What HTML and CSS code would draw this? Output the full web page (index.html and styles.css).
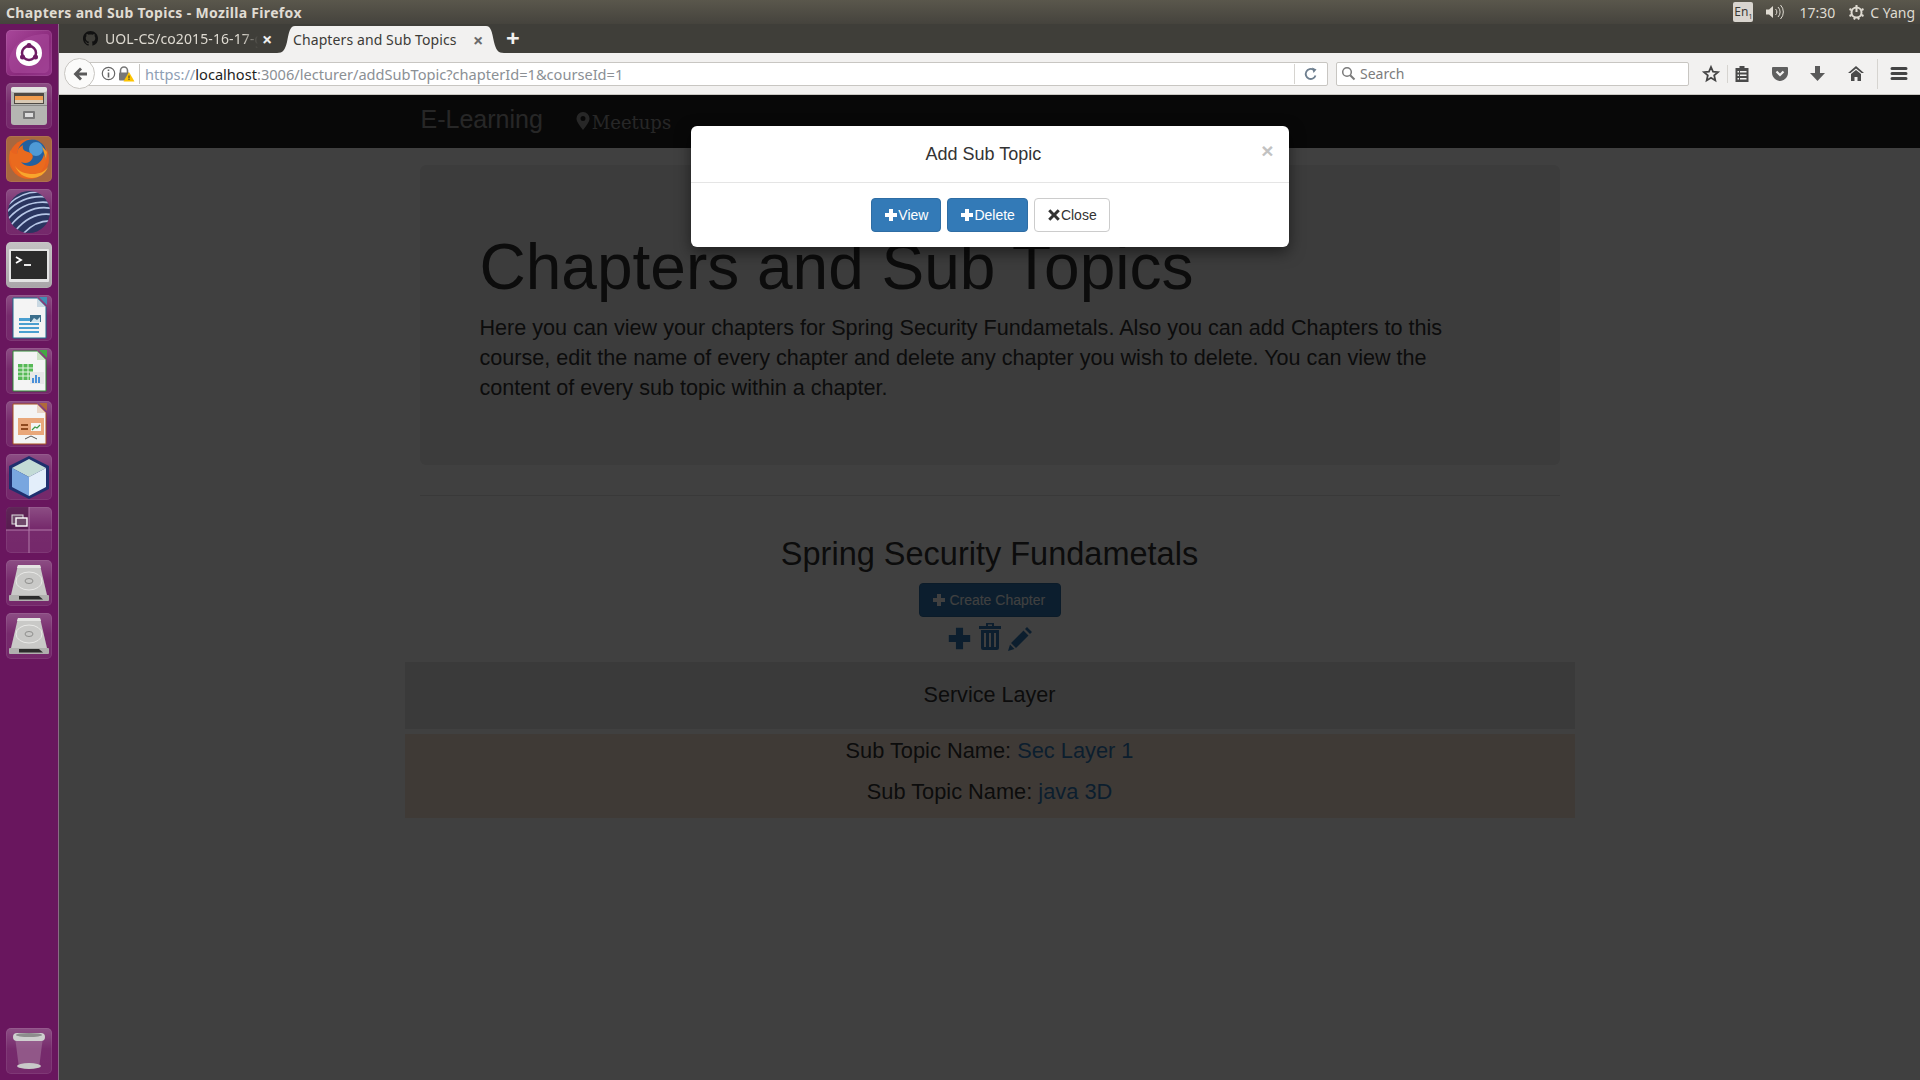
FILE: index.html
```html
<!DOCTYPE html>
<html lang="en">
<head>
  <meta charset="UTF-8" />
  <title>Chapters and Sub Topics - Mozilla Firefox</title>
  <link rel="stylesheet" href="styles.css">
</head>
<body>
  <svg class="defs" width="0" height="0">
    <symbol id="g-plus" viewBox="0 0 14 14"><path d="M5 1h4v4h4v4H9v4H5V9H1V5h4z"/></symbol>
    <symbol id="g-x" viewBox="0 0 14 14"><path d="M3.300 1.200L7 4.900l3.700-3.700 2.100 2.100L9.100 7l3.700 3.700-2.100 2.100L7 9.100l-3.700 3.700-2.100-2.100L4.900 7 1.200 3.300z"/></symbol>
    <symbol id="disk" viewBox="0 0 46 46">
      <path d="M12 5h22l7 30H5z" fill="#c9c9c7"/>
      <path d="M12 5h22l1 3H11z" fill="#e4e4e2"/>
      <ellipse cx="23" cy="21" rx="13" ry="9" fill="none" stroke="#e9e9e7" stroke-width="1"/>
      <ellipse cx="23" cy="21" rx="4" ry="2.500" fill="none" stroke="#8f8f8d" stroke-width="1"/>
      <rect x="3" y="35" width="40" height="6" rx="1" fill="#b0b0ae"/>
      <path d="M13 36h20l4 3.500H13z" fill="#2b2b2b"/>
    </symbol>
  </svg>

  <!-- Ubuntu top panel -->
  <div class="panel">
    <span class="panel-title">Chapters and Sub Topics - Mozilla Firefox</span>
    <div class="indicators">
      <span class="lang">En<sub>1</sub></span>
      <svg class="vol" width="20" height="16" viewBox="0 0 20 16"><path d="M1 5.500h3L8 2v12L4 10.500H1z" fill="#dfdbd2"/><path d="M10.500 5a4 4 0 0 1 0 6M13 3a7 7 0 0 1 0 10M15.500 1a10 10 0 0 1 0 14" fill="none" stroke="#dfdbd2" stroke-width="1"/></svg>
      <span class="clock">17:30</span>
      <svg class="gear" width="17" height="17" viewBox="0 0 17 17"><circle cx="8.500" cy="8.500" r="5" fill="none" stroke="#dfdbd2" stroke-width="2"/><path d="M8.500 1v7M1.500 5l2 1M15.500 5l-2 1M1.500 12l2-1M15.500 12l-2-1M6 15.500l1-2M11 15.500l-1-2" stroke="#dfdbd2" stroke-width="2"/></svg>
      <span class="user">C Yang</span>
    </div>
  </div>

  <div class="desktop">
    <!-- Launcher -->
    <nav class="launcher">
      <div class="tile tile-ubuntu">
        <svg viewBox="0 0 46 46"><path d="M3 30C6 14 20 4 40 4c3 0 3 1 3 3v30c0 4-2 6-6 6H9c-4 0-6-4-6-13z" fill="#a94a9b" opacity=".6"/><circle cx="23" cy="23" r="13" fill="#fff"/><circle cx="23" cy="23" r="7" fill="none" stroke="#6f1d63" stroke-width="2.500"/><circle cx="23" cy="15.500" r="2.500" fill="#6f1d63"/><circle cx="16.500" cy="27" r="2.500" fill="#6f1d63"/><circle cx="29.500" cy="27" r="2.500" fill="#6f1d63"/></svg>
      </div>
      <div class="tile">
        <svg viewBox="0 0 46 46"><rect x="5" y="4" width="36" height="38" rx="3" fill="#b5b5b2"/><rect x="5" y="4" width="36" height="5" rx="2" fill="#e3e3e1"/><rect x="8" y="10" width="30" height="11" fill="#4f4a44"/><rect x="9" y="13" width="28" height="4" fill="#ef9c4e"/><rect x="9" y="17" width="28" height="3" fill="#d8c9b4"/><rect x="5" y="22" width="36" height="1" fill="#8a8a88"/><rect x="17" y="28" width="12" height="8" rx="1" fill="#777"/><rect x="19" y="30" width="8" height="4" fill="#ddd"/></svg>
      </div>
      <div class="tile tile-firefox">
        <svg viewBox="0 0 46 46"><circle cx="23" cy="23" r="20" fill="#e8631f"/><circle cx="26" cy="18" r="14.500" fill="#23609f"/><circle cx="30" cy="13" r="7" fill="#4f9ad6"/><path d="M4 14c2 3 4 4 7 4 0-4 2-7 6-9-1 4 1 6 5 7 4 1 6 4 4 7-2 4-7 5-11 3 3 4 9 5 14 3 5-2 8-6 9-11l2 6c-1 10-9 18-19 18C10 42 2 28 4 14z" fill="#ea6a1e"/><path d="M9 30c3 7 9 12 17 12 7 0 13-4 16-11-4 5-9 7-15 7-8 0-14-2-18-8z" fill="#f8a62c"/><path d="M36 10l5 6-1 8z" fill="#f59a23"/></svg>
      </div>
      <div class="tile">
        <svg viewBox="0 0 46 46"><defs><clipPath id="ball"><circle cx="23" cy="23" r="21"/></clipPath></defs><circle cx="23" cy="23" r="21" fill="#2a3560"/><g clip-path="url(#ball)" fill="none" stroke="#b6c6e6" stroke-width="1.700"><path d="M0 18C9 8 20 3 32 3M0 24C12 10 26 6 42 8M2 30C14 16 30 11 46 14M5 36C17 22 32 16 48 20M10 41c11-13 24-18 38-15M17 45c9-10 18-14 30-13"/></g></svg>
      </div>
      <div class="tile tile-terminal">
        <svg viewBox="0 0 46 46"><rect x="3" y="7" width="40" height="33" rx="1" fill="#e4e4e4"/><rect x="5" y="9" width="36" height="28" fill="#2b2b2b"/><path d="M10 15l5 3-5 3" fill="none" stroke="#fff" stroke-width="1.800"/><path d="M18 23h7" stroke="#fff" stroke-width="1.800"/></svg>
      </div>
      <div class="tile">
        <svg viewBox="0 0 46 46"><path d="M7 3h24l9 9v31H7z" fill="#f4f4f4" stroke="#1b6d8f" stroke-width="1"/><path d="M31 3l9 9h-9z" fill="#c9d8e2"/><path d="M33 2h8v8z" fill="#3f8fb5"/><path d="M13 23h12v3H13zM13 28h20v2H13zM13 32h20v2H13zM13 36h20v2H13z" fill="#4a9fd0"/><rect x="24" y="20" width="11" height="7" fill="#3c6f8c"/><path d="M25 27l3-4 3 2 3-3v5z" fill="#cfe3ec"/></svg>
      </div>
      <div class="tile">
        <svg viewBox="0 0 46 46"><path d="M7 3h24l9 9v31H7z" fill="#f4f4f4" stroke="#2c8a35" stroke-width="1"/><path d="M31 3l9 9h-9z" fill="#cde3c6"/><path d="M33 2h8v8z" fill="#43a843"/><path d="M12 16h15v16H12z" fill="#57b957"/><path d="M12 20h15M12 24h15M12 28h15M17 16v16M22 16v16" stroke="#e9f5e6" stroke-width="1"/><rect x="24" y="24" width="14" height="12" fill="#e8e8e8"/><path d="M26 35v-5h2v5zM29 35v-8h2v8zM32 35v-6h2v6z" fill="#4a90d9"/></svg>
      </div>
      <div class="tile">
        <svg viewBox="0 0 46 46"><path d="M7 3h24l9 9v31H7z" fill="#f4f4f4" stroke="#a8501e" stroke-width="1"/><path d="M31 3l9 9h-9z" fill="#ead5c5"/><path d="M33 2h8v8z" fill="#b06a3a"/><rect x="12" y="17" width="26" height="17" fill="#e9a77a"/><rect x="15" y="23" width="7" height="2" fill="#8f4a1e"/><rect x="15" y="27" width="7" height="2" fill="#8f4a1e"/><rect x="25" y="22" width="10" height="8" fill="#f4f4f4"/><path d="M26 29l3-3 2 1 3-3" fill="none" stroke="#3f9a46" stroke-width="1.200"/><path d="M19 38l6-3 6 3" fill="none" stroke="#555" stroke-width="1"/></svg>
      </div>
      <div class="tile">
        <svg viewBox="0 0 46 46"><path d="M23 2l20 10v23L23 45 3 35V12z" fill="#1f2f6e"/><path d="M23 5l17 9-17 9-17-9z" fill="#c3dbd6"/><path d="M6 14l17 9v19L6 33z" fill="#79a6df"/><path d="M40 14l-17 9v19l17-9z" fill="#e3eefa"/></svg>
      </div>
      <div class="tile tile-workspace">
        <svg viewBox="0 0 46 46"><rect x="0" y="0" width="23" height="23" fill="#4b1645" opacity=".7"/><path d="M23 0v46M0 23h46" stroke="#b27aa9" stroke-width="1"/><rect x="6" y="8" width="11" height="9" fill="#6f4a6a" stroke="#ddd" stroke-width="1"/><rect x="10" y="11" width="11" height="8" fill="#6f4a6a" stroke="#fff" stroke-width="1.400"/></svg>
      </div>
      <div class="tile"><svg viewBox="0 0 46 46"><use href="#disk"/></svg></div>
      <div class="tile"><svg viewBox="0 0 46 46"><use href="#disk"/></svg></div>
      <div class="tile tile-trash">
        <svg viewBox="0 0 46 46"><path d="M9 9l4 31h20l4-31z" fill="#a77ba0" opacity=".55"/><ellipse cx="23" cy="38" rx="12" ry="3" fill="#c9c9c9"/><rect x="7" y="5" width="32" height="8" rx="4" fill="#cfcfcf"/><ellipse cx="23" cy="7" rx="13" ry="2" fill="#8d8d8d"/></svg>
      </div>
    </nav>

    <div class="browser">
      <!-- Tabs -->
      <div class="tabs">
        <div class="tab">
          <svg class="tab-icon" width="15" height="15" viewBox="0 0 16 16"><path fill="#111" d="M8 0C3.580 0 0 3.580 0 8c0 3.540 2.290 6.530 5.470 7.590.4.070.55-.17.55-.38 0-.19-.01-.82-.01-1.490-2.010.37-2.530-.49-2.690-.94-.09-.23-.48-.94-.82-1.130-.28-.15-.68-.52-.01-.53.63-.01 1.080.58 1.230.82.72 1.210 1.870.87 2.330.66.07-.52.28-.87.51-1.070-1.780-.2-3.640-.89-3.640-3.950 0-.87.31-1.590.82-2.150-.08-.2-.36-1.020.08-2.120 0 0 .67-.21 2.200.82.64-.18 1.320-.27 2-.27.68 0 1.360.09 2 .27 1.530-1.040 2.200-.82 2.200-.82.44 1.100.16 1.920.08 2.120.51.56.82 1.270.82 2.150 0 3.070-1.870 3.750-3.650 3.950.29.25.54.73.54 1.480 0 1.070-.01 1.930-.01 2.200 0 .21.15.46.55.38A8.013 8.013 0 0 0 16 8c0-4.420-3.580-8-8-8z"/></svg>
          <span class="tab-label">UOL-CS/co2015-16-17-g</span>
          <span class="tab-close">×</span>
        </div>
        <div class="tab-active">
          <svg class="tab-curve" width="18" height="27" viewBox="0 0 18 27"><path d="M0 27c6 0 8-3 10-11C12 6 13 0 18 0v27z" fill="#f2f1f0"/></svg>
          <div class="tab-body">
            <span class="tab-label">Chapters and Sub Topics</span>
            <span class="tab-close">×</span>
          </div>
          <svg class="tab-curve" width="18" height="27" viewBox="0 0 18 27"><path d="M18 27c-6 0-8-3-10-11C6 6 5 0 0 0v27z" fill="#f2f1f0"/></svg>
        </div>
        <span class="new-tab">+</span>
      </div>

      <!-- Toolbar -->
      <div class="toolbar">
        <button class="back">
          <svg width="16" height="16" viewBox="0 0 16 16"><path d="M8 1.500l2 2L7 6.500h8v3H7l3 3-2 2L1.500 8z" fill="#5a5a5a"/></svg>
        </button>
        <div class="urlbar">
          <svg class="info" width="15" height="15" viewBox="0 0 15 15"><circle cx="7.500" cy="7.500" r="6.200" fill="none" stroke="#666" stroke-width="1.200"/><path d="M6.700 6.500h1.600v5H6.700zM6.700 3.500h1.600v1.600H6.700z" fill="#666"/></svg>
          <svg class="lock" width="17" height="16" viewBox="0 0 17 16"><path d="M2.500 7V4.500a3.500 3.500 0 0 1 7 0V7" fill="none" stroke="#777" stroke-width="1.600"/><rect x="1" y="6.500" width="10" height="8" rx="1" fill="#777"/><path d="M11 6l5.500 9.500h-11z" fill="#fdc400"/><path d="M10.500 9.500h1v3h-1zM10.500 13h1v1h-1z" fill="#333"/></svg>
          <span class="url"><span class="scheme">https://</span><span class="host">localhost</span>:3006/lecturer/addSubTopic?chapterId=1&amp;courseId=1</span>
          <span class="reload">
            <svg width="14" height="14" viewBox="0 0 14 14"><path d="M11.500 8.500A5 5 0 1 1 9.500 2.800" fill="none" stroke="#6e7f8f" stroke-width="1.800"/><path d="M8.200 0.500l4.300 2-3 3.500z" fill="#6e7f8f"/></svg>
          </span>
        </div>
        <div class="searchbar">
          <svg width="15" height="15" viewBox="0 0 15 15"><circle cx="6" cy="6" r="4.300" fill="none" stroke="#7a7a7a" stroke-width="1.500"/><path d="M9.200 9.200l4.300 4.300" stroke="#7a7a7a" stroke-width="2"/></svg>
          <span class="placeholder">Search</span>
        </div>
        <div class="tools">
          <svg class="tool" width="24" height="20" viewBox="-4 -2 24 20"><path d="M8 1l2 4.600 5 .5-3.800 3.300 1.100 5L8 11.800l-4.300 2.600 1.100-5L1 6.100l5-.5z" fill="none" stroke="#454545" stroke-width="1.800"/></svg>
          <span class="tool-sep"></span>
          <svg class="tool" width="24" height="20" viewBox="-4 -2 24 20"><path d="M1.500 2h4V0h5v2h4v14h-13z" fill="#4a4a4a"/><path d="M3.500 5h1.500v1.500H3.500zM6 5h6.500v1.500H6zM3.500 8.500h1.500V10H3.500zM6 8.500h6.500V10H6zM3.500 12h1.500v1.500H3.500zM6 12h6.500v1.500H6z" fill="#f2f1f0"/></svg>
          <svg class="tool" width="24" height="20" viewBox="-4 -2 24 20"><path d="M1 1h14a1 1 0 0 1 1 1v5c0 4-4 8-8 8S0 11 0 7V2a1 1 0 0 1 1-1z" fill="#5f5f5f"/><path d="M4.500 5.500L8 9l3.500-3.500" fill="none" stroke="#f2f1f0" stroke-width="2.200"/></svg>
          <svg class="tool" width="24" height="20" viewBox="-4 -2 24 20"><path d="M5 0h5v7h5l-7.500 8L0 7h5z" fill="#5a5a5a"/></svg>
          <svg class="tool" width="24" height="20" viewBox="-4 -2 24 20"><path d="M8 0L0 7h2.500L8 2.500 13.500 7H16z" fill="#4a4a4a"/><path d="M8 4L3 8v7h3.500v-4h3v4H13V8z" fill="#4a4a4a"/></svg>
          <span class="tool-sep tall"></span>
          <svg class="tool" width="24" height="20" viewBox="-4 -2 24 20"><path d="M1 1h14a1 1 0 0 1 0 3H1a1 1 0 0 1 0-3zM1 6h14a1 1 0 0 1 0 3H1a1 1 0 0 1 0-3zM1 11h14a1 1 0 0 1 0 3H1a1 1 0 0 1 0-3z" fill="#444"/></svg>
        </div>
      </div>

      <!-- The page -->
      <div class="page">
        <div class="navbar">
          <div class="nav-inner">
            <a class="brand">E-Learning</a>
            <a class="nav-link">
              <svg width="14" height="18" viewBox="0 0 14 18"><path fill-rule="evenodd" d="M7 0a6.500 6.500 0 0 1 6.500 6.500C13.500 10 10 14 7 18 4 14 .5 10 .5 6.500A6.500 6.500 0 0 1 7 0zm0 4a2.500 2.500 0 1 0 0 5 2.500 2.500 0 0 0 0-5z"/></svg>Meetups
            </a>
          </div>
        </div>

        <div class="container">
          <div class="jumbotron">
            <h1>Chapters and Sub Topics</h1>
            <p>Here you can view your chapters for Spring Security Fundametals. Also you can add Chapters to this course, edit the name of every chapter and delete any chapter you wish to delete. You can view the content of every sub topic within a chapter.</p>
          </div>
          <hr />

          <div class="course">
            <h2>Spring Security Fundametals</h2>
            <button class="btn btn-primary btn-create"><svg class="g" width="14" height="14"><use href="#g-plus"/></svg> Create Chapter</button>
            <div class="chapter-actions">
              <svg width="25" height="25" viewBox="0 0 14 14"><use href="#g-plus"/></svg>
              <svg width="24" height="28" viewBox="0 0 24 28"><path fill-rule="evenodd" d="M8 0h8v3h7v3H1V3h7zm2 1.500V3h4V1.500zM3 7h18v18a2 2 0 0 1-2 2H5a2 2 0 0 1-2-2zm3 3v14h2V10zm5 0v14h2V10zm5 0v14h2V10z"/></svg>
              <svg width="25" height="25" viewBox="0 0 25 25"><path d="M19 1l5 5-2 2-5-5zM15.500 4.500l5 5L8 22l-5-5zM2 18.500L6.500 23 0 25z"/></svg>
            </div>
            <div class="chapter-row">Service Layer</div>
            <div class="topics">
              <div class="topic">Sub Topic Name: <a>Sec Layer 1</a></div>
              <div class="topic">Sub Topic Name: <a>java 3D</a></div>
            </div>
          </div>
        </div>

        <!-- Modal, open on top of the page -->
        <div class="backdrop">
          <div class="modal">
            <div class="modal-header">
              <span class="close">×</span>
              <h4>Add Sub Topic</h4>
            </div>
            <div class="modal-footer">
              <button class="btn btn-primary"><svg class="g" width="14" height="14"><use href="#g-plus"/></svg>View</button>
              <button class="btn btn-primary"><svg class="g" width="14" height="14"><use href="#g-plus"/></svg>Delete</button>
              <button class="btn btn-default"><svg class="g" width="14" height="14"><use href="#g-x"/></svg>Close</button>
            </div>
          </div>
        </div>
      </div>
    </div>
  </div>
</body>
</html>
```

FILE: styles.css
```css
* {
  box-sizing: border-box;
}

html, body {
  height: 100%;
}

body {
  margin: 0;
  display: flex;
  flex-direction: column;
  overflow: hidden;
  font-family: 'Liberation Sans', Arial, sans-serif;
  color: #333;
  background: #404040;
}

.defs {
  position: absolute;
}

/* top panel */
.panel {
  height: 24px;
  flex: none;
  display: flex;
  align-items: center;
  justify-content: space-between;
  padding: 0 5px 0 6px;
  background: linear-gradient(#5a574c, #45433d);
  color: #dfdbd2;
  font-family: 'Noto Sans', sans-serif;
  font-size: 14px;
}

.panel-title {
  font-weight: 700;
  letter-spacing: 0.33px;
  color: #e0dcd3;
}

.indicators {
  display: flex;
  align-items: center;
}

.lang {
  width: 20px;
  height: 20px;
  border-radius: 2px;
  background: #d9d5cf;
  color: #3c3b37;
  font-size: 12px;
  line-height: 20px;
  text-align: center;
}

.lang sub {
  font-size: 7px;
  line-height: 0;
}

.vol {
  margin-left: 12px;
}

.clock {
  margin-left: 14px;
}

.gear {
  margin-left: 13px;
}

.user {
  margin-left: 5px;
}

.desktop {
  flex: 1;
  display: flex;
  min-height: 0;
}

/* launcher */
.launcher {
  width: 59px;
  flex: none;
  display: flex;
  flex-direction: column;
  gap: 7px;
  padding: 6px 0 6px 6px;
  background: #69165e;
  border-right: 1px solid #8a6a86;
}

.tile {
  width: 46px;
  height: 46px;
  flex: none;
  border-radius: 5px;
  background: linear-gradient(rgba(255,255,255,0.24), rgba(255,255,255,0.09) 45%, rgba(255,255,255,0.08));
  box-shadow: inset 0 0 0 1px rgba(255,255,255,0.08);
}

.tile svg {
  display: block;
}

.tile-ubuntu {
  background: linear-gradient(135deg, #a8479a, #8a2a7c 60%, #94358a);
}

.tile-firefox {
  background: #a8673f;
}

.tile-terminal {
  background: linear-gradient(#c4c1c3, #a9a5a8);
}

.tile-workspace {
  overflow: hidden;
}

.tile-trash {
  margin-top: auto;
}

/* browser */
.browser {
  flex: 1;
  min-width: 0;
  display: flex;
  flex-direction: column;
}

.tabs {
  height: 29px;
  flex: none;
  display: flex;
  align-items: stretch;
  background: #3f3e39;
  font-family: 'Noto Sans', sans-serif;
  font-size: 14px;
  letter-spacing: 0.1px;
}

.tab {
  width: 218px;
  display: flex;
  align-items: center;
  padding-left: 24px;
  color: #dfdbd2;
}

.tab-icon {
  flex: none;
  margin-right: 7px;
}

.tab .tab-label {
  width: 153px;
  flex: none;
  white-space: nowrap;
  -webkit-mask-image: linear-gradient(90deg, #000 90%, transparent);
  mask-image: linear-gradient(90deg, #000 90%, transparent);
}

.tab-close {
  margin-left: 4px;
  font-size: 18px;
  font-weight: 700;
  line-height: 1;
  color: #eee;
}

.tab-active {
  width: 227px;
  margin-top: 2px;
  display: flex;
  color: #3c3b37;
}

.tab-curve {
  flex: none;
  display: block;
}

.tab-body {
  flex: 1;
  display: flex;
  align-items: center;
  background: #f2f1f0;
  white-space: nowrap;
}

.tab-active .tab-label {
  margin-left: -2px;
  width: 180px;
}

.tab-active .tab-close {
  margin-left: 0;
  color: #6b6b6b;
}

.new-tab {
  margin-left: 2px;
  font-size: 24px;
  line-height: 27px;
  font-weight: 700;
  color: #f2f1f0;
}

.toolbar {
  height: 42px;
  flex: none;
  display: flex;
  align-items: center;
  padding-left: 5px;
  background: #f2f1f0;
  border-bottom: 1px solid #c9c7c3;
  font-family: 'Noto Sans', sans-serif;
  font-size: 14.600px;
}

.back {
  position: relative;
  z-index: 1;
  width: 31px;
  height: 31px;
  flex: none;
  margin-right: -10px;
  padding: 0;
  display: flex;
  align-items: center;
  justify-content: center;
  background: #fbfbfa;
  border: 1px solid #c8c6c2;
  border-radius: 50%;
}

.urlbar,
.searchbar {
  height: 24px;
  display: flex;
  align-items: center;
  background: #fff;
  border: 1px solid #c8c6c2;
  border-radius: 2px;
}

.urlbar {
  flex: 1;
  min-width: 0;
  padding-left: 15px;
}

.info {
  flex: none;
}

.lock {
  flex: none;
  margin-left: 2px;
}

.url {
  flex: 1;
  margin-left: 4px;
  padding-left: 5px;
  border-left: 1px solid #c8c6c2;
  color: #8b9095;
  white-space: nowrap;
  line-height: 20px;
}

.scheme {
  color: #8fa0b4;
}

.host {
  color: #1e1e1e;
}

.reload {
  width: 33px;
  height: 20px;
  flex: none;
  display: flex;
  align-items: center;
  justify-content: center;
  border-left: 1px solid #d6d4d0;
}

.searchbar {
  width: 353px;
  flex: none;
  margin-left: 8px;
  padding-left: 4px;
  font-size: 14px;
}

.placeholder {
  margin-left: 4px;
  color: #7c7c7c;
}

.tools {
  flex: none;
  display: flex;
  align-items: center;
  gap: 14px;
  padding: 0 9px 0 10px;
}

.tool-sep {
  width: 1px;
  height: 18px;
  margin: 0 -12px 0 -10px;
  background: #d6d4d0;
}

.tool-sep.tall {
  height: 30px;
  margin: 0 -5px;
}

/* the page under the modal */
.page {
  position: relative;
  flex: 1;
  min-height: 0;
  background: #fff;
  overflow: hidden;
}

.navbar {
  height: 53px;
  background: #222;
}

.nav-inner {
  width: 1170px;
  height: 100%;
  margin: 0 auto;
  padding: 0 15px 0 16px;
  display: flex;
  align-items: center;
}

.brand {
  margin-top: -4px;
  font-size: 25px;
  color: #9d9d9d;
}

.nav-link {
  display: flex;
  align-items: center;
  margin-left: 33px;
  margin-top: 1px;
  font-family: 'DejaVu Serif', serif;
  font-size: 18px;
  color: #9d9d9d;
  fill: #9d9d9d;
}

.nav-link svg {
  margin-right: 2px;
  margin-top: -3px;
}

.container {
  width: 1170px;
  margin: 17px auto 0;
  padding: 0 15px;
}

.jumbotron {
  height: 300px;
  padding: 48px 60px;
  background: #eee;
  border-radius: 6px;
}

.jumbotron h1 {
  margin: 19px 0 11px;
  font-size: 64px;
  font-weight: 400;
  line-height: 1.1;
}

.jumbotron p {
  max-width: 985px;
  margin: 0;
  font-size: 21.600px;
  line-height: 30px;
}

hr {
  margin: 30px 0 0;
  border: 0;
  border-top: 1px solid #e3e3e3;
}

.course {
  display: flex;
  flex-direction: column;
  align-items: center;
  margin: 0 -15px;
}

.course h2 {
  margin: 40px 0 11px;
  font-size: 32.500px;
  font-weight: 400;
  line-height: 36px;
}

.btn {
  display: inline-flex;
  align-items: center;
  height: 34px;
  padding: 0 12px;
  font-family: inherit;
  font-size: 14px;
  border: 1px solid transparent;
  border-radius: 4px;
}

.btn-primary {
  color: #fff;
  background: #337ab7;
  border-color: #2e6da4;
}

.btn-default {
  color: #333;
  background: #fff;
  border-color: #ccc;
}

.g {
  fill: currentColor;
  flex: none;
}

.btn-create {
  width: 142px;
  white-space: pre;
}

.chapter-actions {
  display: flex;
  align-items: flex-end;
  gap: 6px;
  height: 34px;
  fill: #337ab7;
}

.chapter-row {
  width: 100%;
  height: 67px;
  margin-top: 11px;
  background: #e8e8e8;
  font-size: 21.600px;
  line-height: 65px;
  text-align: center;
}

.topics {
  width: 100%;
  height: 84px;
  margin-top: 5px;
  background: #fbe8d8;
  font-size: 21.800px;
  text-align: center;
}

.topic {
  height: 41px;
  line-height: 34px;
}

.topic a {
  color: #337ab7;
}

/* modal */
.backdrop {
  position: absolute;
  inset: 0;
  display: flex;
  justify-content: center;
  align-items: flex-start;
  padding-top: 31px;
  background: rgba(0,0,0,0.75);
}

.modal {
  width: 598px;
  background: #fff;
  border-radius: 6px;
  box-shadow: 0 5px 15px rgba(0,0,0,0.5);
}

.modal-header {
  height: 57px;
  padding: 15px;
  border-bottom: 1px solid #e5e5e5;
}

.modal-header h4 {
  margin: 0;
  font-size: 18px;
  font-weight: 400;
  line-height: 26px;
  text-align: center;
}

.close {
  float: right;
  margin-top: -3px;
  font-size: 21px;
  font-weight: 700;
  line-height: 26px;
  color: #c2c2c2;
}

.modal-footer {
  display: flex;
  justify-content: center;
  gap: 6px;
  padding: 15px 15px 15px 17px;
}
```
